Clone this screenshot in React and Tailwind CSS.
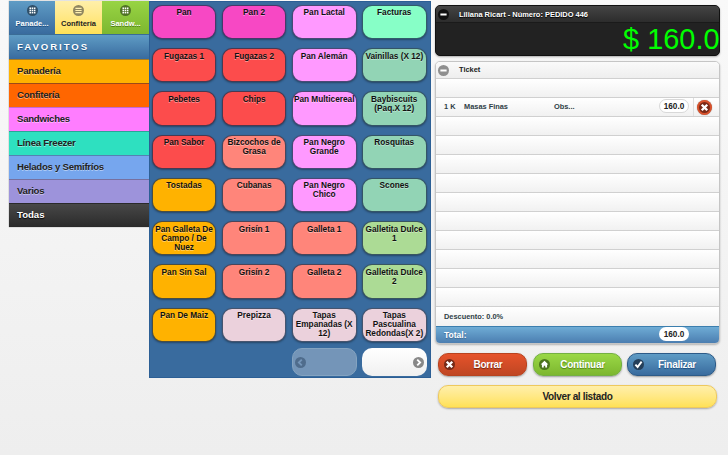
import React from 'react';

const FONT = "font-['Liberation_Sans',Arial,sans-serif]";

const categories = [
  { label: 'Panadería', color: 'bg-[#ffb200]', border: 'border-[#a87b20]' },
  { label: 'Confitería', color: 'bg-[#ff6600]', border: 'border-[#9c4a18]' },
  { label: 'Sandwiches', color: 'bg-[#ff7dff]', border: 'border-[#c46ad0]' },
  { label: 'Línea Freezer', color: 'bg-[#2ee0c0]', border: 'border-[#2aa596]' },
  { label: 'Helados y Semifríos', color: 'bg-[#76a6ee]', border: 'border-[#5482b4]' },
  { label: 'Varios', color: 'bg-[#9d93db]', border: 'border-[#77709f]' },
];

const products = [
  ['Pan', 'bg-[#f748c4]'], ['Pan 2', 'bg-[#f748c4]'], ['Pan Lactal', 'bg-[#ff99ff]'], ['Facturas', 'bg-[#87ffc7]'],
  ['Fugazas 1', 'bg-[#fc4c4c]'], ['Fugazas 2', 'bg-[#fc4c4c]'], ['Pan Alemán', 'bg-[#ff99ff]'], ['Vainillas (X 12)', 'bg-[#92d4b5]'],
  ['Pebetes', 'bg-[#fc4c4c]'], ['Chips', 'bg-[#fc4c4c]'], ['Pan Multicereal', 'bg-[#ff99ff]'], ['Baybiscuits (Paq.X 12)', 'bg-[#92d4b5]'],
  ['Pan Sabor', 'bg-[#fc4c4c]'], ['Bizcochos de Grasa', 'bg-[#ff857a]'], ['Pan Negro Grande', 'bg-[#ff99ff]'], ['Rosquitas', 'bg-[#92d4b5]'],
  ['Tostadas', 'bg-[#ffb200]'], ['Cubanas', 'bg-[#ff857a]'], ['Pan Negro Chico', 'bg-[#ff99ff]'], ['Scones', 'bg-[#92d4b5]'],
  ['Pan Galleta De Campo / De Nuez', 'bg-[#ffb200]'], ['Grisín 1', 'bg-[#ff857a]'], ['Galleta 1', 'bg-[#ff857a]'], ['Galletita Dulce 1', 'bg-[#acdb95]'],
  ['Pan Sin Sal', 'bg-[#ffb200]'], ['Grisín 2', 'bg-[#ff857a]'], ['Galleta 2', 'bg-[#ff857a]'], ['Galletita Dulce 2', 'bg-[#acdb95]'],
  ['Pan De Maiz', 'bg-[#ffb200]'], ['Prepizza', 'bg-[#ebd1dc]'], ['Tapas Empanadas (X 12)', 'bg-[#ebd1dc]'], ['Tapas Pascualina Redondas(X 2)', 'bg-[#ebd1dc]'],
];

const glyphs = {
  grid: (
    <g fill="currentColor">
      {[2.7, 5.1, 7.5].map((y) => [2.7, 5.1, 7.5].map((x) => <rect key={`${x}-${y}`} x={x} y={y} width="1.7" height="1.7" />))}
    </g>
  ),
  bars: <path d="M2.6 3.6h6.8M2.6 6h6.8M2.6 8.4h6.8" stroke="currentColor" strokeWidth="1.3" />,
  minus: <path d="M2.6 6h6.8" stroke="currentColor" strokeWidth="2.2" />,
  cross: <path d="M3 3l6 6M9 3l-6 6" stroke="currentColor" strokeWidth="2.6" />,
  home: <path d="M6 1.8L1.8 6.1h1.4v3.2h2V7.4h1.6v1.9h2V6.1h1.4z" fill="currentColor" />,
  check: <path d="M2.6 6.2L5 8.7L9.4 2.8" fill="none" stroke="currentColor" strokeWidth="2.1" />,
  left: <path d="M7.4 2.8L4.2 6l3.2 3.2" fill="none" stroke="currentColor" strokeWidth="2" />,
  right: <path d="M4.6 2.8L7.8 6l-3.2 3.2" fill="none" stroke="currentColor" strokeWidth="2" />,
};

function RoundIcon({ name, className = '' }) {
  return (
    <svg viewBox="0 0 12 12" className={`shrink-0 rounded-full ${className}`}>
      {glyphs[name]}
    </svg>
  );
}

function Tab({ icon, label, className, iconClass }) {
  return (
    <div className={`flex flex-col items-center pt-1 ${className}`}>
      <RoundIcon name={icon} className={`size-[11px] ${iconClass}`} />
      <span className="mt-[3px] text-[7.5px] leading-[9px]">{label}</span>
    </div>
  );
}

function ActionButton({ icon, label, className, iconClass }) {
  return (
    <button
      className={`flex h-[23px] items-center rounded-[10px] border pl-[5px] text-[10px] tracking-[-0.3px] font-bold text-white shadow-[0_1px_2px_rgba(0,0,0,0.35)] ${className}`}
    >
      <RoundIcon name={icon} className={`size-[11px] ${iconClass}`} />
      <span className="flex-1 pr-[5px] text-center">{label}</span>
    </button>
  );
}

const ROW = 'border-t border-[#d0d0d0] bg-linear-to-b from-white to-[#f1f1f1]';

export default function App() {
  return (
    <div className={`flex h-[455px] w-[728px] items-start overflow-hidden bg-linear-to-b from-[#f9f9f9] to-[#eeeeee] pt-px pl-[9px] font-bold ${FONT}`}>
      <nav className="w-[140px] shrink-0 shadow-[0_0_1px_rgba(0,0,0,0.5)]">
        <div className="grid h-[33px] grid-cols-[46px_47px_47px]">
          <Tab icon="grid" label="Panade..." className="bg-linear-to-b from-[#5f9cc5] to-[#396b9e] text-white [text-shadow:0_1px_0_#194b7e]" iconClass="bg-[#2f4f68]" />
          <Tab icon="bars" label="Confitería" className="bg-linear-to-b from-[#ffefaa] to-[#ffe155] text-[#222]" iconClass="bg-[#8f8660] text-[#fff0b0]" />
          <Tab icon="grid" label="Sandw..." className="bg-linear-to-b from-[#98d444] to-[#7db72f] text-white [text-shadow:0_1px_0_#4e7d15]" iconClass="bg-[#4f7225]" />
        </div>
        <div className="flex h-[25px] items-center border-t border-[#3a6c96] bg-linear-to-b from-[#5f9cc5] to-[#396b9e] pl-2 text-[9.6px] tracking-[1.95px] text-white [text-shadow:0_1px_1px_#194b7e]">
          FAVORITOS
        </div>
        {categories.map((c) => (
          <div key={c.label} className={`flex h-[24px] items-center border-t pl-2 text-[9.6px] tracking-[-0.25px] text-[#222] [text-shadow:0_1px_0_rgba(255,255,255,0.45)] ${c.color} ${c.border}`}>
            {c.label}
          </div>
        ))}
        <div className="flex h-[24px] items-center border-y border-[#2a2a2a] bg-linear-to-b from-[#484848] to-[#2c2c2c] pt-px pl-2 text-[9.6px] text-white [text-shadow:0_1px_1px_#000]">
          Todas
        </div>
      </nav>

      <section className="h-[377px] w-[281.5px] shrink-0 border border-[#2c5f95] bg-[#396b9e] pt-[2.9px] pl-[1.7px]">
        <div className="grid auto-rows-[34.3px] grid-cols-[repeat(4,64.7px)] gap-x-[5.4px] gap-y-[8.95px]">
          {products.map(([label, color]) => (
            <div
              key={label}
              className={`flex justify-center rounded-[10px] border border-[#1d3552]/80 pt-[2.5px] text-center text-[8.25px] leading-[9px] text-[#111] shadow-[0_1px_2px_rgba(0,0,0,0.35)] [text-shadow:0_1px_0_rgba(255,255,255,0.4)] ${color}`}
            >
              {label}
            </div>
          ))}
        </div>
        <div className="mt-[6.5px] grid h-[27.5px] grid-cols-[repeat(4,64.7px)] gap-x-[5.4px]">
          <div className="col-start-3 flex items-center rounded-[10px] border border-[#84a3c0] bg-[#7495b8] pl-[2px] text-[#7495b8]">
            <RoundIcon name="left" className="size-[11px] bg-[#4f6c8c]" />
          </div>
          <div className="flex items-center justify-end rounded-[10px] bg-linear-to-b from-white to-[#f0f0f0] pr-[3px] text-white">
            <RoundIcon name="right" className="size-[11px] bg-[#888]" />
          </div>
        </div>
      </section>

      <main className="mt-1 ml-[4.5px] w-[284.5px] shrink-0">
        <header className="h-[51px] overflow-hidden rounded-[5px] border border-[#111] bg-[#222] text-white shadow-[0_1px_2px_rgba(0,0,0,0.3)]">
          <div className="flex h-[17px] items-center border-b border-[#1a1a1a] bg-linear-to-b from-[#454545] to-[#2c2c2c] pl-[2px] text-[7.45px]">
            <RoundIcon name="minus" className="size-[11px] bg-[#111]" />
            <span className="pt-px pl-[10px] [text-shadow:0_1px_1px_#000]">Liliana Ricart - Número: PEDIDO 446</span>
          </div>
          <div className="-mr-px text-right text-[28.9px] leading-[33px] font-normal text-[#00ff00]">$ 160.0</div>
        </header>

        <section className="mt-[5px] h-[283px] overflow-hidden rounded-[5px] border border-[#c5c5c5] bg-white text-[#2f3e46] shadow-[0_1px_2px_rgba(0,0,0,0.25)]">
          <div className="flex h-[16px] items-center bg-linear-to-b from-[#fafafa] to-[#eeeeee] pl-[2px] text-[7.4px] text-[#222]">
            <RoundIcon name="minus" className="size-[11px] bg-[#8f8f8f] text-white" />
            <span className="pl-[10px]">Ticket</span>
          </div>
          <div className={`h-[19px] ${ROW}`} />
          <div className={`flex h-[19px] items-center pl-2 text-[7.4px] ${ROW}`}>
            <span className="w-5">1 K</span>
            <span className="w-[90px]">Masas Finas</span>
            <span className="w-[105px]">Obs...</span>
            <span className="mb-[2px] flex h-[14px] w-[30px] items-center justify-center rounded-[7px] border border-[#d8d8d8] bg-white pt-px text-[8.2px] leading-[10px] text-[#222]">160.0</span>
            <span className="ml-[4px] h-full w-px bg-[#dedede]" />
            <span className="ml-[3px] flex size-[15px] items-center justify-center rounded-full bg-[#d9512b] text-white shadow-[0_0_1px_rgba(0,0,0,0.5)]">
              <RoundIcon name="cross" className="size-[11px] bg-[#7a2a17]" />
            </span>
          </div>
          {Array.from({ length: 10 }, (_, i) => (
            <div key={i} className={`h-[19px] ${ROW}`} />
          ))}
          <div className={`flex h-[20px] items-center pl-2 text-[7.4px] ${ROW}`}>Descuento: 0.0%</div>
          <div className="flex h-[18px] items-center border-t border-[#3b7eae] bg-linear-to-b from-[#6facd5] to-[#497bae] pl-2 text-[8.5px] text-white">
            <span className="w-[215px] [text-shadow:0_1px_1px_#3e6790]">Total:</span>
            <span className="mb-[3px] flex h-[14px] w-[30px] items-center justify-center rounded-[7px] bg-white pt-px text-[8.2px] leading-[10px] text-[#222]">160.0</span>
          </div>
        </section>

        <div className="mt-[9px] grid grid-cols-3 gap-[5.5px] pr-[3.5px] pl-[3px]">
          <ActionButton icon="cross" label="Borrar" className="border-[#b8431f] bg-linear-to-b from-[#e6532b] to-[#bf4623] [text-shadow:0_1px_1px_#6d2410]" iconClass="bg-[#762a17]" />
          <ActionButton icon="home" label="Continuar" className="border-[#74b042] bg-linear-to-b from-[#9ad846] to-[#7db72f] [text-shadow:0_1px_1px_#4e7d15]" iconClass="bg-[#4c741c]" />
          <ActionButton icon="check" label="Finalizar" className="border-[#2d5b88] bg-linear-to-b from-[#5f9cc5] to-[#396b9e] [text-shadow:0_1px_1px_#194b7e]" iconClass="bg-[#253f59]" />
        </div>
        <button className="mt-[9px] ml-[3px] h-[23px] w-[279px] rounded-[10px] border border-[#eec95e] bg-linear-to-b from-[#ffefaa] to-[#ffe155] text-[10px] tracking-[-0.35px] font-bold text-[#222] shadow-[0_1px_2px_rgba(0,0,0,0.3)]">
          Volver al listado
        </button>
      </main>
    </div>
  );
}
